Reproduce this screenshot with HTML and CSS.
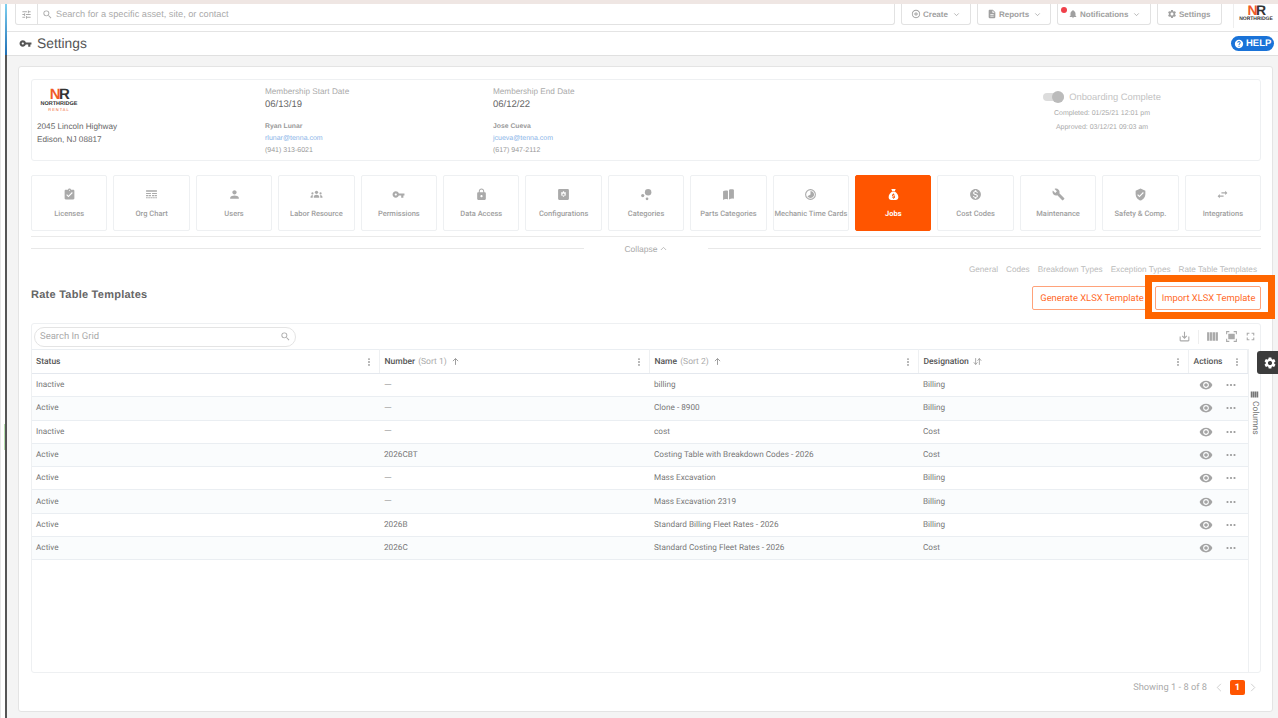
FILE: index.html
```html
<!DOCTYPE html>
<html lang="en">
<head>
    <meta charset="UTF-8">
    <title>Settings - Rate Table Templates</title>
    <link rel="stylesheet" href="styles.css">
</head>
<body>
    <svg class="sprite" xmlns="http://www.w3.org/2000/svg">
        <symbol id="i-search" viewBox="0 0 24 24"><path d="M15.5 14h-.79l-.28-.27A6.47 6.47 0 0 0 16 9.5 6.5 6.5 0 1 0 9.5 16c1.61 0 3.09-.59 4.23-1.57l.27.28v.79l5 4.99L20.49 19l-4.99-5zm-6 0C7.01 14 5 11.99 5 9.5S7.01 5 9.5 5 14 7.01 14 9.5 11.99 14 9.5 14z"/></symbol>
        <symbol id="i-tune" viewBox="0 0 24 24"><path d="M3 17v2h6v-2H3zM3 5v2h10V5H3zm10 16v-2h8v-2h-8v-2h-2v6h2zM7 9v2H3v2h4v2h2V9H7zm14 4v-2H11v2h10zm-6-4h2V7h4V5h-4V3h-2v6z"/></symbol>
        <symbol id="i-key" viewBox="0 0 24 24"><path d="M12.65 10C11.83 7.67 9.61 6 7 6c-3.31 0-6 2.69-6 6s2.69 6 6 6c2.61 0 4.83-1.67 5.65-4H17v4h4v-4h2v-4H12.65zM7 14c-1.1 0-2-.9-2-2s.9-2 2-2 2 .9 2 2-.9 2-2 2z"/></symbol>
        <symbol id="i-add" viewBox="0 0 24 24"><path d="M13 7h-2v4H7v2h4v4h2v-4h4v-2h-4V7zm-1-5C6.48 2 2 6.48 2 12s4.48 10 10 10 10-4.48 10-10S17.52 2 12 2zm0 18c-4.41 0-8-3.59-8-8s3.59-8 8-8 8 3.59 8 8-3.59 8-8 8z"/></symbol>
        <symbol id="i-doc" viewBox="0 0 24 24"><path d="M14 2H6c-1.1 0-1.99.9-1.99 2L4 20c0 1.1.89 2 1.99 2H18c1.1 0 2-.9 2-2V8l-6-6zm2 16H8v-2h8v2zm0-4H8v-2h8v2zm-3-5V3.5L18.5 9H13z"/></symbol>
        <symbol id="i-bell" viewBox="0 0 24 24"><path d="M12 22c1.1 0 2-.9 2-2h-4c0 1.1.9 2 2 2zm6-6v-5c0-3.07-1.63-5.64-4.5-6.32V4c0-.83-.67-1.5-1.5-1.5s-1.5.67-1.5 1.5v.68C7.64 5.36 6 7.92 6 11v5l-2 2v1h16v-1l-2-2z"/></symbol>
        <symbol id="i-gear" viewBox="0 0 24 24"><path d="M19.14 12.94c.04-.3.06-.61.06-.94 0-.32-.02-.64-.07-.94l2.03-1.58a.49.49 0 0 0 .12-.61l-1.92-3.32a.49.49 0 0 0-.59-.22l-2.39.96c-.5-.38-1.03-.7-1.62-.94l-.36-2.54a.484.484 0 0 0-.48-.41h-3.84c-.24 0-.43.17-.47.41l-.36 2.54c-.59.24-1.13.57-1.62.94l-2.39-.96c-.22-.08-.47 0-.59.22L2.74 8.87c-.12.21-.08.47.12.61l2.03 1.58c-.05.3-.09.63-.09.94s.02.64.07.94l-2.03 1.58a.49.49 0 0 0-.12.61l1.92 3.32c.12.22.37.29.59.22l2.39-.96c.5.38 1.03.7 1.62.94l.36 2.54c.05.24.24.41.48.41h3.84c.24 0 .44-.17.47-.41l.36-2.54c.59-.24 1.13-.56 1.62-.94l2.39.96c.22.08.47 0 .59-.22l1.92-3.32c.12-.22.07-.47-.12-.61l-2.01-1.58zM12 15.6c-1.98 0-3.6-1.62-3.6-3.6s1.62-3.6 3.6-3.6 3.6 1.62 3.6 3.6-1.62 3.6-3.6 3.6z"/></symbol>
        <symbol id="i-help" viewBox="0 0 24 24"><path d="M12 2C6.48 2 2 6.48 2 12s4.48 10 10 10 10-4.48 10-10S17.52 2 12 2zm1 17h-2v-2h2v2zm2.07-7.75l-.9.92C13.45 12.9 13 13.5 13 15h-2v-.5c0-1.1.45-2.1 1.17-2.83l1.24-1.26c.37-.36.59-.86.59-1.41 0-1.1-.9-2-2-2s-2 .9-2 2H8c0-2.21 1.79-4 4-4s4 1.79 4 4c0 .88-.36 1.68-.93 2.25z"/></symbol>
        <symbol id="i-license" viewBox="0 0 24 24"><path d="M19 3h-4.18C14.4 1.84 13.3 1 12 1c-1.3 0-2.4.84-2.82 2H5c-1.1 0-2 .9-2 2v14c0 1.1.9 2 2 2h14c1.1 0 2-.9 2-2V5c0-1.1-.9-2-2-2zm-7 0c.55 0 1 .45 1 1s-.45 1-1 1-1-.45-1-1 .45-1 1-1zm-2 14l-4-4 1.41-1.41L10 14.17l6.59-6.59L18 9l-8 8z"/></symbol>
        <symbol id="i-org" viewBox="0 0 24 24"><path d="M2 4h20v3H2zM2 9h9v2H2zM13 9h9v2h-9zM2 13h4v2H2zM7 13h4v2H7zM13 13h4v2h-4zM18 13h4v2h-4zM2 17h3v2H2zM6 17h3v2H6zM10 17h4v2h-4zM15 17h3v2h-3zM19 17h3v2h-3z"/></symbol>
        <symbol id="i-person" viewBox="0 0 24 24"><path d="M12 12c2.21 0 4-1.79 4-4s-1.79-4-4-4-4 1.79-4 4 1.79 4 4 4zm0 2c-2.67 0-8 1.34-8 4v2h16v-2c0-2.66-5.33-4-8-4z"/></symbol>
        <symbol id="i-group" viewBox="0 0 24 24"><circle cx="12" cy="8" r="3"/><path d="M7 18v-2c0-2 2.5-3.5 5-3.5s5 1.5 5 3.5v2z"/><circle cx="4.5" cy="10" r="2"/><path d="M1 18v-1.5c0-1.8 1.8-3 3.5-3 .6 0 1 .1 1.3.2-.5.7-.8 1.5-.8 2.3v2z"/><circle cx="19.5" cy="10" r="2"/><path d="M23 18v-1.5c0-1.8-1.8-3-3.5-3-.6 0-1 .1-1.3.2.5.7.8 1.5.8 2.3v2z"/></symbol>
        <symbol id="i-lock" viewBox="0 0 24 24"><path d="M18 8h-1V6c0-2.76-2.24-5-5-5S7 3.24 7 6v2H6c-1.1 0-2 .9-2 2v10c0 1.1.9 2 2 2h12c1.1 0 2-.9 2-2V10c0-1.1-.9-2-2-2zm-6 9c-1.1 0-2-.9-2-2s.9-2 2-2 2 .9 2 2-.9 2-2 2zm3.1-9H8.9V6c0-1.71 1.39-3.1 3.1-3.1 1.71 0 3.1 1.39 3.1 3.1v2z"/></symbol>
        <symbol id="i-config" viewBox="0 0 24 24"><path fill-rule="evenodd" d="M4 2h16a2 2 0 0 1 2 2v16a2 2 0 0 1-2 2H4a2 2 0 0 1-2-2V4a2 2 0 0 1 2-2zm7 4l-.6 2.2-1.9-.6-1.2 2 1.5 1.4-1.5 1.4 1.2 2 1.9-.6.6 2.2h2l.6-2.2 1.9.6 1.2-2-1.5-1.4 1.5-1.4-1.2-2-1.9.6L13 6zm1 4a2 2 0 1 1 0 4 2 2 0 0 1 0-4z"/></symbol>
        <symbol id="i-cats" viewBox="0 0 24 24"><circle cx="15" cy="8" r="6"/><circle cx="5" cy="14" r="3"/><circle cx="13" cy="20" r="2.5"/></symbol>
        <symbol id="i-book" viewBox="0 0 24 24"><path d="M2 6c2-1.5 5-2 9-1v16c-4-1-7-.5-9 1zM13 5V3c3-1 6-1 9 0v17c-3-1-6-.5-9 1z"/></symbol>
        <symbol id="i-clock" viewBox="0 0 24 24"><path d="M12 2a10 10 0 1 0 0 20 10 10 0 0 0 0-20zm0 18a8 8 0 1 1 0-16 8 8 0 0 1 0 16z"/><path d="M12 5.5a6.5 6.5 0 1 1-5.6 9.8L12 12z"/></symbol>
        <symbol id="i-bag" viewBox="0 0 24 24"><path fill-rule="evenodd" d="M8 2h8l-1.5 4h-5zM9 7h6c3 2 6 6 6 10 0 3-2 5-5 5H8c-3 0-5-2-5-5 0-4 3-8 6-10zm2.3 3v1.1c-1.3.3-2 1.1-2 2.2 0 1.3 1 1.9 2.5 2.3 1 .3 1.3.5 1.3.9s-.4.7-1.1.7c-.8 0-1.3-.3-1.4-1H9.1c.1 1.3 1 2 2.2 2.3V20h1.5v-1.1c1.3-.2 2.1-1 2.1-2.2 0-1.4-1-2-2.5-2.4-1-.3-1.3-.5-1.3-.8s.3-.6 1-.6.99.3 1.1.9h1.5c-.1-1.1-.8-1.9-2-2.2V10z"/></symbol>
        <symbol id="i-dollar" viewBox="0 0 24 24"><path d="M12 2C6.48 2 2 6.48 2 12s4.48 10 10 10 10-4.48 10-10S17.52 2 12 2zm1.41 16.09V20h-2.67v-1.93c-1.71-.36-3.16-1.46-3.27-3.4h1.96c.1 1.05.82 1.87 2.65 1.87 1.96 0 2.4-.98 2.4-1.59 0-.83-.44-1.61-2.67-2.14-2.48-.6-4.18-1.62-4.18-3.67 0-1.72 1.39-2.84 3.11-3.21V4h2.67v1.95c1.86.45 2.79 1.86 2.85 3.39H14.3c-.05-1.11-.64-1.87-2.22-1.87-1.5 0-2.4.68-2.4 1.64 0 .84.65 1.39 2.67 1.91s4.18 1.39 4.18 3.91c-.01 1.83-1.38 2.83-3.12 3.16z"/></symbol>
        <symbol id="i-wrench" viewBox="0 0 24 24"><path d="M22.7 19l-9.1-9.1c.9-2.3.4-5-1.5-6.9-2-2-5-2.4-7.4-1.3L9 6 6 9 1.6 4.7C.4 7.1.9 10.1 2.9 12.1c1.9 1.9 4.6 2.4 6.9 1.5l9.1 9.1c.4.4 1 .4 1.4 0l2.3-2.3c.5-.4.5-1.1.1-1.4z"/></symbol>
        <symbol id="i-shield" viewBox="0 0 24 24"><path d="M12 1L3 5v6c0 5.55 3.84 10.74 9 12 5.16-1.26 9-6.45 9-12V5l-9-4zm-2 16l-4-4 1.41-1.41L10 14.17l6.59-6.59L18 9l-8 8z"/></symbol>
        <symbol id="i-swap" viewBox="0 0 24 24"><path d="M6.99 11L3 15l3.99 4v-3H14v-2H6.99v-3zM21 9l-3.99-4v3H10v2h7.01v3L21 9z"/></symbol>
        <symbol id="i-eye" viewBox="0 0 24 24"><path d="M12 4.5C7 4.5 2.73 7.61 1 12c1.73 4.39 6 7.5 11 7.5s9.27-3.11 11-7.5c-1.73-4.39-6-7.5-11-7.5zM12 17c-2.76 0-5-2.24-5-5s2.24-5 5-5 5 2.24 5 5-2.24 5-5 5zm0-8c-1.66 0-3 1.34-3 3s1.34 3 3 3 3-1.34 3-3-1.34-3-3-3z"/></symbol>
        <symbol id="i-dots" viewBox="0 0 24 24"><circle cx="5" cy="12" r="2.2"/><circle cx="12" cy="12" r="2.2"/><circle cx="19" cy="12" r="2.2"/></symbol>
        <symbol id="i-vdots" viewBox="0 0 24 24"><circle cx="12" cy="5" r="2.2"/><circle cx="12" cy="12" r="2.2"/><circle cx="12" cy="19" r="2.2"/></symbol>
        <symbol id="i-cols" viewBox="0 0 24 24"><path d="M2 4h4v16H2zM7 4h4v16H7zM12 4h5v16h-5zM18 4h4v16h-4z"/></symbol>
        <symbol id="i-focus" viewBox="0 0 24 24"><path d="M2 8V2h6v2H4v4zM16 2h6v6h-2V4h-4zM22 16v6h-6v-2h4v-4zM8 22H2v-6h2v4h4zM6 7h12v10H6z"/></symbol>
        <symbol id="i-full" viewBox="0 0 24 24"><path d="M7 14H5v5h5v-2H7v-3zm-2-4h2V7h3V5H5v5zm12 7h-3v2h5v-5h-2v3zM14 5v2h3v3h2V5h-5z"/></symbol>
        <symbol id="i-save" viewBox="0 0 24 24"><path d="M19 12v7H5v-7H3v7c0 1.1.9 2 2 2h14c1.1 0 2-.9 2-2v-7h-2zm-6 .67l2.59-2.58L17 11.5l-5 5-5-5 1.41-1.41L11 12.67V3h2z"/></symbol>
        <symbol id="i-down" viewBox="0 0 24 24"><path d="M6 9l6 6 6-6" fill="none" stroke="currentColor" stroke-width="2"/></symbol>
        <symbol id="i-up" viewBox="0 0 24 24"><path d="M5 16l7-7 7 7" fill="none" stroke="currentColor" stroke-width="2"/></symbol>
        <symbol id="i-left" viewBox="0 0 24 24"><path d="M15 4l-8 8 8 8" fill="none" stroke="currentColor" stroke-width="2"/></symbol>
        <symbol id="i-right" viewBox="0 0 24 24"><path d="M9 4l8 8-8 8" fill="none" stroke="currentColor" stroke-width="2"/></symbol>
        <symbol id="i-arrow" viewBox="0 0 24 24"><path d="M12 21V4M5 11l7-7 7 7" fill="none" stroke="currentColor" stroke-width="2.5"/></symbol>
        <symbol id="i-sort" viewBox="0 0 24 24"><path d="M7 3v17M2 14l5 6 5-6M17 21V4M12 10l5-6 5 6" fill="none" stroke="currentColor" stroke-width="2.2"/></symbol>
    </svg>

    <div class="rail"><div class="rail-mark"></div></div>

    <div class="app">
        <div class="strip"></div>

        <header class="topbar">
            <div class="global-search">
                <span class="filter-btn"><svg class="icon"><use href="#i-tune"/></svg></span>
                <svg class="icon search-icon"><use href="#i-search"/></svg>
                <span>Search for a specific asset, site, or contact</span>
            </div>
            <div class="top-btn create"><svg class="icon"><use href="#i-add"/></svg>Create<svg class="icon caret"><use href="#i-down"/></svg></div>
            <div class="top-btn reports"><svg class="icon"><use href="#i-doc"/></svg>Reports<svg class="icon caret"><use href="#i-down"/></svg></div>
            <div class="top-btn notifications"><span class="red-dot"></span><svg class="icon"><use href="#i-bell"/></svg>Notifications<svg class="icon caret"><use href="#i-down"/></svg></div>
            <div class="top-btn settings"><svg class="icon"><use href="#i-gear"/></svg>Settings</div>
            <div class="top-logo">
                <div class="logo-mark small"><span class="n">N</span><span class="r">R</span></div>
                <div class="logo-name small">NORTHRIDGE</div>
            </div>
        </header>

        <div class="titlebar">
            <svg class="icon title-key"><use href="#i-key"/></svg>
            <h1>Settings</h1>
            <div class="help"><svg class="icon"><use href="#i-help"/></svg>HELP</div>
        </div>

        <main class="content">
            <div class="card">
                <section class="company">
                    <div>
                        <div class="logo">
                            <div class="logo-mark"><span class="n">N</span><span class="r">R</span></div>
                            <div class="logo-name">NORTHRIDGE</div>
                            <div class="logo-sub">RENTAL</div>
                        </div>
                        <p class="address">2045 Lincoln Highway<br>Edison, NJ 08817</p>
                    </div>
                    <div class="member">
                        <div class="member-label">Membership Start Date</div>
                        <div class="member-date">06/13/19</div>
                        <div class="contact-name">Ryan Lunar</div>
                        <div class="contact-mail">rlunar@tenna.com</div>
                        <div class="contact-phone">(941) 313-6021</div>
                    </div>
                    <div class="member">
                        <div class="member-label">Membership End Date</div>
                        <div class="member-date">06/12/22</div>
                        <div class="contact-name">Jose Cueva</div>
                        <div class="contact-mail">jcueva@tenna.com</div>
                        <div class="contact-phone">(617) 947-2112</div>
                    </div>
                    <div class="onboarding">
                        <div class="onboarding-title"><span class="toggle"><span class="knob"></span></span>Onboarding Complete</div>
                        <div class="onboarding-line">Completed: 01/25/21 12:01 pm</div>
                        <div class="onboarding-line">Approved: 03/12/21 09:03 am</div>
                    </div>
                </section>

                <nav class="tiles">
                    <div class="tile"><svg class="icon"><use href="#i-license"/></svg>Licenses</div>
                    <div class="tile"><svg class="icon"><use href="#i-org"/></svg>Org Chart</div>
                    <div class="tile"><svg class="icon"><use href="#i-person"/></svg>Users</div>
                    <div class="tile"><svg class="icon"><use href="#i-group"/></svg>Labor Resource</div>
                    <div class="tile"><svg class="icon"><use href="#i-key"/></svg>Permissions</div>
                    <div class="tile"><svg class="icon"><use href="#i-lock"/></svg>Data Access</div>
                    <div class="tile"><svg class="icon"><use href="#i-config"/></svg>Configurations</div>
                    <div class="tile"><svg class="icon"><use href="#i-cats"/></svg>Categories</div>
                    <div class="tile"><svg class="icon"><use href="#i-book"/></svg>Parts Categories</div>
                    <div class="tile"><svg class="icon"><use href="#i-clock"/></svg>Mechanic Time Cards</div>
                    <div class="tile active"><svg class="icon"><use href="#i-bag"/></svg>Jobs</div>
                    <div class="tile"><svg class="icon"><use href="#i-dollar"/></svg>Cost Codes</div>
                    <div class="tile"><svg class="icon"><use href="#i-wrench"/></svg>Maintenance</div>
                    <div class="tile"><svg class="icon"><use href="#i-shield"/></svg>Safety &amp; Comp.</div>
                    <div class="tile"><svg class="icon"><use href="#i-swap"/></svg>Integrations</div>
                </nav>

                <div class="collapse">
                    <span class="collapse-line"></span>
                    <span class="collapse-text">Collapse<svg class="icon"><use href="#i-up"/></svg></span>
                    <span class="collapse-line"></span>
                </div>

                <div class="subnav">
                    <span>General</span>
                    <span>Codes</span>
                    <span>Breakdown Types</span>
                    <span>Exception Types</span>
                    <span>Rate Table Templates</span>
                </div>

                <div class="page-head">
                    <h2>Rate Table Templates</h2>
                    <div class="btn">Generate XLSX Template</div>
                    <div class="btn import">Import XLSX Template</div>
                    <div class="highlight"></div>
                </div>

                <section class="grid">
                    <div class="grid-tools">
                        <div class="grid-search">
                            <span>Search In Grid</span>
                            <svg class="icon"><use href="#i-search"/></svg>
                        </div>
                        <div class="tool-icons">
                            <svg class="icon tool-save"><use href="#i-save"/></svg>
                            <span class="tool-sep"></span>
                            <svg class="icon"><use href="#i-cols"/></svg>
                            <svg class="icon"><use href="#i-focus"/></svg>
                            <svg class="icon"><use href="#i-full"/></svg>
                        </div>
                    </div>
                    <div class="grid-body">
                        <table>
                            <colgroup>
                                <col class="col-status"><col class="col-number"><col class="col-name"><col class="col-desig"><col>
                            </colgroup>
                            <thead>
                                <tr>
                                    <th><div class="th-in">Status<svg class="icon menu"><use href="#i-vdots"/></svg></div></th>
                                    <th><div class="th-in">Number <em>(Sort 1)</em><svg class="icon sort"><use href="#i-arrow"/></svg><svg class="icon menu"><use href="#i-vdots"/></svg></div></th>
                                    <th><div class="th-in">Name <em>(Sort 2)</em><svg class="icon sort"><use href="#i-arrow"/></svg><svg class="icon menu"><use href="#i-vdots"/></svg></div></th>
                                    <th><div class="th-in">Designation<svg class="icon sort"><use href="#i-sort"/></svg><svg class="icon menu"><use href="#i-vdots"/></svg></div></th>
                                    <th><div class="th-in">Actions<svg class="icon menu"><use href="#i-vdots"/></svg></div></th>
                                </tr>
                            </thead>
                            <tbody>
                                <tr><td>Inactive</td><td><span class="dash">—</span></td><td>billing</td><td>Billing</td><td><div class="acts"><svg class="icon eye"><use href="#i-eye"/></svg><svg class="icon more"><use href="#i-dots"/></svg></div></td></tr>
                                <tr><td>Active</td><td><span class="dash">—</span></td><td>Clone - 8900</td><td>Billing</td><td><div class="acts"><svg class="icon eye"><use href="#i-eye"/></svg><svg class="icon more"><use href="#i-dots"/></svg></div></td></tr>
                                <tr><td>Inactive</td><td><span class="dash">—</span></td><td>cost</td><td>Cost</td><td><div class="acts"><svg class="icon eye"><use href="#i-eye"/></svg><svg class="icon more"><use href="#i-dots"/></svg></div></td></tr>
                                <tr><td>Active</td><td>2026CBT</td><td>Costing Table with Breakdown Codes - 2026</td><td>Cost</td><td><div class="acts"><svg class="icon eye"><use href="#i-eye"/></svg><svg class="icon more"><use href="#i-dots"/></svg></div></td></tr>
                                <tr><td>Active</td><td><span class="dash">—</span></td><td>Mass Excavation</td><td>Billing</td><td><div class="acts"><svg class="icon eye"><use href="#i-eye"/></svg><svg class="icon more"><use href="#i-dots"/></svg></div></td></tr>
                                <tr><td>Active</td><td><span class="dash">—</span></td><td>Mass Excavation 2319</td><td>Billing</td><td><div class="acts"><svg class="icon eye"><use href="#i-eye"/></svg><svg class="icon more"><use href="#i-dots"/></svg></div></td></tr>
                                <tr><td>Active</td><td>2026B</td><td>Standard Billing Fleet Rates - 2026</td><td>Billing</td><td><div class="acts"><svg class="icon eye"><use href="#i-eye"/></svg><svg class="icon more"><use href="#i-dots"/></svg></div></td></tr>
                                <tr><td>Active</td><td>2026C</td><td>Standard Costing Fleet Rates - 2026</td><td>Cost</td><td><div class="acts"><svg class="icon eye"><use href="#i-eye"/></svg><svg class="icon more"><use href="#i-dots"/></svg></div></td></tr>
                            </tbody>
                        </table>
                        <aside class="side-panel">
                            <div class="side-tab"><svg class="icon"><use href="#i-cols"/></svg><span>Columns</span></div>
                        </aside>
                    </div>
                </section>

                <div class="pager">
                    <span class="pager-text">Showing 1 - 8 of 8</span>
                    <svg class="icon"><use href="#i-left"/></svg>
                    <span class="page-num">1</span>
                    <svg class="icon pager-next"><use href="#i-right"/></svg>
                </div>
            </div>
        </main>
    </div>

    <div class="gear-tab"><svg class="icon"><use href="#i-gear"/></svg></div>
</body>
</html>
```

FILE: styles.css
```css
* {
    margin: 0;
    padding: 0;
    box-sizing: border-box;
}

html, body {
    height: 718px;
    overflow: hidden;
}

body {
    display: flex;
    font-family: 'Roboto', sans-serif;
    background-color: #f4f4f4;
    color: #777;
    text-rendering: geometricPrecision;
}

.sprite {
    display: none;
}

.icon {
    width: 14px;
    height: 14px;
    fill: currentColor;
    flex: none;
}

.rail {
    position: relative;
    width: 7px;
    background-color: white;
    border-left: 1px solid #e6e6e6;
    border-right: 2px solid #555;
    flex: none;
}

.rail::before {
    content: "";
    position: absolute;
    top: 4px;
    right: -2px;
    width: 2px;
    height: 51px;
    background: linear-gradient(to bottom, #7fd0f0, #1f6fb5);
}

.rail::after {
    content: "";
    position: absolute;
    top: 0;
    left: -1px;
    right: -2px;
    height: 4px;
    background-color: #efe6e3;
}

.rail-mark {
    position: absolute;
    top: 424px;
    left: 3px;
    width: 1px;
    height: 26px;
    background-color: #b7e0b0;
}

.app {
    flex: 1;
    min-width: 0;
    display: flex;
    flex-direction: column;
}

.strip {
    height: 4px;
    background-color: #efe6e3;
}

/* top bar */
.topbar {
    display: flex;
    align-items: flex-start;
    height: 28px;
    padding-left: 8px;
    background-color: white;
    border-bottom: 1px solid #e4e4e4;
    font-family: 'Liberation Sans', Arial, sans-serif;
}

.global-search {
    display: flex;
    align-items: center;
    flex: none;
    width: 880px;
    height: 21px;
    border: 1px solid #e2e2e2;
    border-top: none;
    border-radius: 0 0 3px 3px;
    font-size: 9.2px;
    color: #aaa;
}

.filter-btn {
    display: flex;
    align-items: center;
    justify-content: center;
    width: 22px;
    height: 20px;
    border-right: 1px solid #e2e2e2;
    color: #aaa;
}

.filter-btn .icon {
    width: 11px;
    height: 11px;
}

.search-icon {
    width: 11px;
    height: 11px;
    margin: 0 3px 0 4px;
}

.top-btn {
    position: relative;
    display: flex;
    align-items: center;
    flex: none;
    height: 21px;
    margin-left: 6px;
    padding-left: 9px;
    border: 1px solid #e2e2e2;
    border-top: none;
    border-radius: 0 0 3px 3px;
    font-size: 8px;
    font-weight: bold;
    color: #a0a0a0;
}

.top-btn .icon {
    width: 10px;
    height: 10px;
    margin-right: 2px;
}

.top-btn .caret {
    width: 9px;
    height: 9px;
    margin: 0 0 0 4px;
}

.create { width: 70px; }
.reports { width: 74px; }
.notifications { width: 94px; padding-left: 10px; }
.settings { width: 65px; }

.red-dot {
    position: absolute;
    top: 3px;
    left: 3px;
    width: 6px;
    height: 6px;
    border-radius: 50%;
    background-color: #f0404a;
}

.top-logo {
    flex: none;
    width: 45px;
    height: 24px;
    margin-left: 11px;
    padding-top: 1px;
    border-left: 1px solid #eee;
    text-align: center;
}

/* logo */
.logo-mark {
    font-family: 'Liberation Sans', Arial, sans-serif;
    font-weight: bold;
    font-size: 15px;
    line-height: 12px;
    letter-spacing: -1.5px;
}

.logo-mark.small {
    font-size: 14px;
    line-height: 11px;
}

.logo-mark .n {
    color: #f05a28;
}

.logo-mark .r {
    color: #333;
}

.logo-name {
    font-family: 'Liberation Sans', Arial, sans-serif;
    font-weight: bold;
    font-size: 5.5px;
    line-height: 6px;
    color: #333;
}

.logo-name.small {
    font-size: 5px;
}

.logo-sub {
    font-size: 4px;
    line-height: 5px;
    color: #f05a28;
    letter-spacing: 1px;
}

.logo {
    width: 44px;
    margin: 0 0 8px 0;
    padding-top: 9px;
    text-align: center;
}

/* title bar */
.titlebar {
    display: flex;
    align-items: center;
    height: 24px;
    padding: 0 4px 0 12px;
    background-color: white;
    border-bottom: 1px solid #e0e0e0;
}

.title-key {
    width: 13px;
    height: 13px;
    margin-right: 5px;
    color: #555;
}

.titlebar h1 {
    flex: 1;
    font-family: 'Liberation Sans', Arial, sans-serif;
    font-size: 13.8px;
    font-weight: normal;
    color: #555;
}

.help {
    display: flex;
    align-items: center;
    gap: 2px;
    width: 43px;
    height: 15px;
    padding-left: 3px;
    border-radius: 8px;
    background-color: #1a73d8;
    color: white;
    font-family: 'Liberation Sans', Arial, sans-serif;
    font-size: 9.5px;
    font-weight: bold;
}

.help .icon {
    width: 10px;
    height: 10px;
}

/* content */
.content {
    flex: 1;
    padding: 10px 5px 6px 11px;
    min-height: 0;
}

.card {
    display: flex;
    flex-direction: column;
    height: 100%;
    padding: 12px 11px 0 12px;
    background-color: white;
    border: 1px solid #e4e4e4;
    border-radius: 3px;
}

.company {
    display: grid;
    grid-template-columns: 228px 228px 530px 158px;
    height: 82px;
    padding-left: 5px;
    border: 1px solid #eef0f2;
    border-radius: 3px;
    font-family: 'Liberation Sans', Arial, sans-serif;
}

.address {
    font-size: 8.2px;
    line-height: 13px;
    color: #666;
}

.member {
    padding-top: 7px;
}

.member-label {
    font-size: 8.2px;
    line-height: 10px;
    color: #aaa;
}

.member-date {
    margin-top: 1px;
    font-size: 9.5px;
    line-height: 13px;
    color: #666;
}

.contact-name {
    margin-top: 11px;
    font-size: 6.8px;
    font-weight: bold;
    line-height: 10px;
    color: #999;
}

.contact-mail {
    margin-top: 2px;
    font-size: 7px;
    line-height: 10px;
    color: #8ab4e8;
}

.contact-phone {
    margin-top: 2px;
    font-size: 7px;
    line-height: 10px;
    color: #999;
}

.onboarding {
    padding-top: 8px;
    text-align: center;
    color: #aaa;
}

.onboarding-title {
    display: flex;
    align-items: center;
    justify-content: center;
    gap: 5px;
    height: 17px;
    font-size: 9.4px;
    color: #c4c4c4;
}

.toggle {
    position: relative;
    width: 21px;
    height: 8px;
    border-radius: 4px;
    background-color: #dcdcdc;
}

.knob {
    position: absolute;
    top: -2px;
    right: 0;
    width: 12px;
    height: 12px;
    border-radius: 50%;
    background-color: #bbb;
}

.onboarding-line {
    margin-top: 4px;
    font-size: 7px;
    line-height: 10px;
    color: #aaa;
}

/* settings tiles */
.tiles {
    display: flex;
    gap: 6px;
    margin-top: 14px;
    padding-bottom: 5px;
    border-bottom: 1px solid #eaeaea;
}

.tile {
    flex: 1;
    min-width: 0;
    height: 56px;
    padding-top: 12px;
    border: 1px solid #eef0f2;
    border-radius: 2px;
    text-align: center;
    font-size: 7.5px;
    font-weight: 500;
    color: #a0a0a0;
    white-space: nowrap;
}

.tile .icon {
    display: block;
    width: 13px;
    height: 13px;
    margin: 0 auto 8px;
    color: #aaa;
}

.tile.active {
    background-color: #ff5500;
    border-color: #ff5500;
    color: white;
    font-weight: bold;
}

.tile.active .icon {
    color: white;
}

.collapse {
    display: flex;
    align-items: center;
    height: 22px;
}

.collapse-line {
    flex: 1;
    height: 1px;
    background-color: #e8e8e8;
}

.collapse-text {
    display: flex;
    align-items: center;
    justify-content: center;
    width: 124px;
    padding-top: 1px;
    font-family: 'Liberation Sans', Arial, sans-serif;
    font-size: 8.5px;
    color: #aaa;
}

.collapse-text .icon {
    width: 9px;
    height: 9px;
    margin-left: 1px;
}

.subnav {
    display: flex;
    justify-content: flex-end;
    gap: 8px;
    height: 14px;
    margin-top: 5px;
    padding-right: 4px;
    font-family: 'Liberation Sans', Arial, sans-serif;
    font-size: 8.2px;
    line-height: 12px;
    color: #bbb;
}

.page-head {
    position: relative;
    display: flex;
    align-items: center;
    height: 24px;
    margin-top: 8px;
}

.page-head h2 {
    flex: 1;
    margin-bottom: 7px;
    font-family: 'Liberation Sans', Arial, sans-serif;
    font-size: 11px;
    font-weight: bold;
    color: #666;
    letter-spacing: 0.25px;
}

.btn {
    display: flex;
    align-items: center;
    justify-content: center;
    flex: none;
    width: 115px;
    height: 24px;
    padding-left: 5px;
    border: 1px solid #ffa27a;
    border-radius: 2px;
    font-size: 9.4px;
    color: #ff6a2a;
    white-space: nowrap;
}

.btn.import {
    width: 106px;
    margin-left: 8px;
    padding-left: 1px;
}

/* the orange box someone drew on the screenshot */
.highlight {
    position: absolute;
    top: -11px;
    right: -14px;
    width: 130px;
    height: 44px;
    border: 7px solid #ff6600;
}

/* grid */
.grid {
    flex: none;
    height: 350px;
    margin-top: 13px;
    border: 1px solid #eef0f2;
    border-radius: 3px;
}

.grid-tools {
    display: flex;
    align-items: center;
    justify-content: space-between;
    height: 25px;
    padding: 0 3px 0 2px;
}

.grid-search {
    display: flex;
    align-items: center;
    justify-content: space-between;
    width: 262px;
    height: 20px;
    padding: 0 4px 0 5px;
    border: 1px solid #e4e4e4;
    border-radius: 10px;
    font-size: 9.5px;
    color: #aaa;
}

.grid-search .icon {
    width: 11px;
    height: 11px;
}

.tool-icons {
    display: flex;
    align-items: center;
    gap: 6px;
    color: #aaa;
}

.tool-icons .icon {
    width: 13px;
    height: 13px;
}

.tool-sep {
    width: 1px;
    height: 14px;
    margin: 0 1px;
    background-color: #eee;
}

.grid-body {
    display: flex;
    height: 324px;
}

table {
    width: 1216px;
    table-layout: fixed;
    border-collapse: collapse;
    align-self: flex-start;
    font-size: 8.2px;
    color: #777;
}

.col-status { width: 347px; }
.col-number { width: 270px; }
.col-name { width: 269px; }
.col-desig { width: 270px; }

th {
    height: 24px;
    padding: 0;
    border-top: 1px solid #eaeef2;
    border-bottom: 1px solid #e4e8ee;
    border-right: 1px solid #eef0f2;
    text-align: left;
    font-size: 8.5px;
    font-weight: 500;
    color: #555;
}

.th-in {
    display: flex;
    align-items: center;
    padding: 0 5px;
    white-space: pre;
}

th:first-child .th-in {
    padding-left: 4px;
}

th em {
    font-style: normal;
    font-weight: normal;
    color: #aaa;
    margin-left: 1px;
}

.th-in .sort {
    width: 9px;
    height: 9px;
    margin-left: 4px;
    color: #999;
}

.th-in .menu {
    width: 10px;
    height: 10px;
    margin-left: auto;
    color: #999;
}

td {
    height: 23.3px;
    padding: 0 5px;
    border-bottom: 1px solid #eaeef2;
    white-space: nowrap;
}

td:first-child {
    padding-left: 4px;
}

.dash {
    font-size: 10px;
    color: #aaa;
}

tbody tr:nth-child(even) td {
    background-color: #fafcfd;
}

.acts {
    display: flex;
    align-items: center;
    gap: 12px;
    padding-left: 6px;
}

.acts .eye {
    width: 14px;
    height: 14px;
    color: #a4a4a4;
}

.acts .more {
    width: 12px;
    height: 12px;
    color: #999;
}

.side-panel {
    flex: 1;
    border-left: 1px solid #eef0f2;
}

.side-tab {
    display: flex;
    align-items: center;
    gap: 2px;
    width: 100%;
    padding-top: 41px;
    writing-mode: vertical-lr;
    font-size: 8.5px;
    color: #777;
}

.side-tab .icon {
    width: 9px;
    height: 9px;
}

.pager {
    display: flex;
    align-items: center;
    justify-content: flex-end;
    gap: 5px;
    height: 28px;
    padding-right: 3px;
    font-size: 9.3px;
    color: #aaa;
}

.pager .icon {
    width: 11px;
    height: 11px;
    color: #ccc;
}

.pager-text {
    margin-right: 2px;
}

.pager .pager-next {
    margin-left: -3px;
}

.page-num {
    display: flex;
    align-items: center;
    justify-content: center;
    width: 15px;
    height: 15px;
    border-radius: 2px;
    background-color: #ff5500;
    color: white;
    font-weight: bold;
}

.gear-tab {
    position: absolute;
    top: 351px;
    right: 0;
    display: flex;
    align-items: center;
    padding-left: 6px;
    width: 21px;
    height: 23px;
    border-radius: 3px 0 0 3px;
    background-color: #3c3c3c;
    color: white;
}
```
